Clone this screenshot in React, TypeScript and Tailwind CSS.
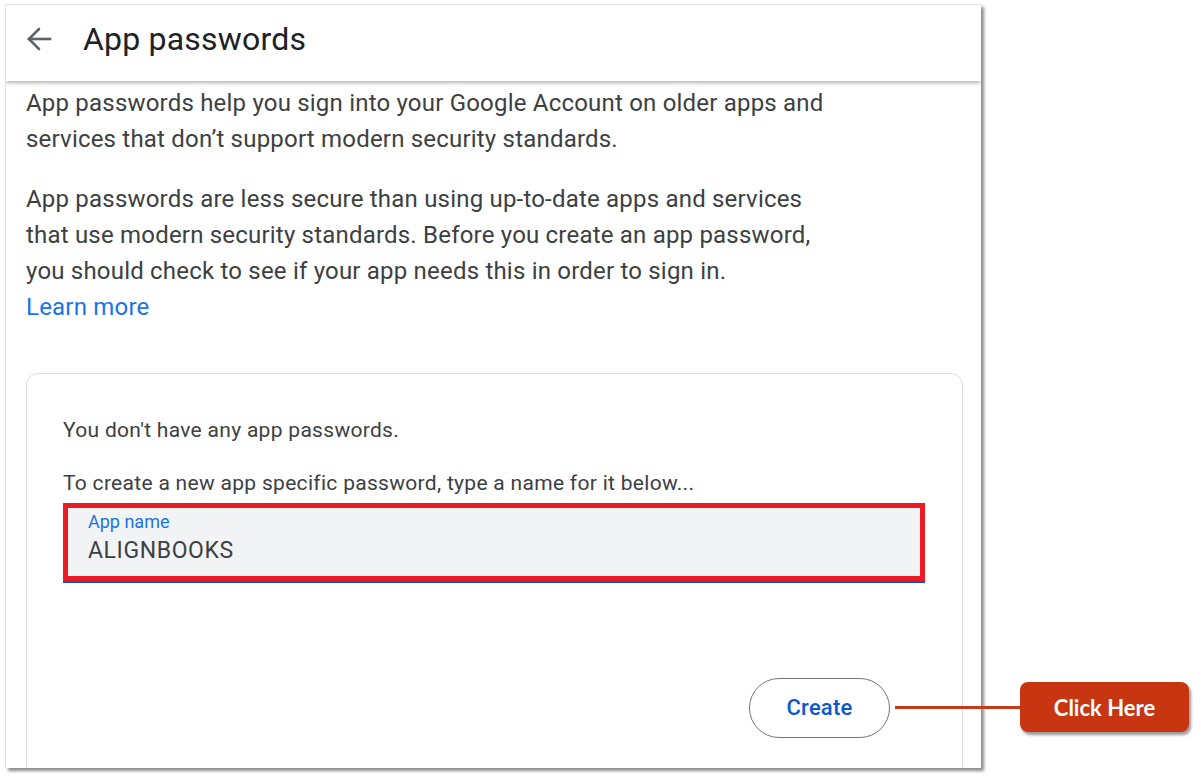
const font = { fontFamily: "Roboto, 'Noto Sans', Arial, sans-serif" };

function BackArrow() {
  return (
    <svg width="26" height="26" viewBox="0 0 26 26" fill="none" stroke="#5f6368" strokeWidth="2.6" strokeLinecap="square">
      <path d="M3 13h21" />
      <path d="M13 3L3 13l10 10" strokeLinecap="round" strokeLinejoin="miter" />
    </svg>
  );
}

export default function App() {
  return (
    <div className="relative h-[777px] w-[1201px] overflow-hidden bg-white" style={font}>
      <div className="ml-[5px] mt-[4px] flex h-[764px] w-[976px] flex-col overflow-hidden border-l border-t border-[#e4e4e4] bg-white shadow-[3px_3px_3px_rgba(0,0,0,0.45)]">
        <div className="relative z-10 flex h-[76px] shrink-0 items-center bg-white pb-[8px] shadow-[0_2px_4px_rgba(0,0,0,0.3)]">
          <div className="ml-[20px]">
            <BackArrow />
          </div>
          <h1 className="ml-[31px] text-[32px] font-normal tracking-[0.2px] text-[#202124]">App passwords</h1>
        </div>

        <div className="flex flex-col pl-[20px] pt-[4px] text-[24px] leading-[36px] tracking-[0.2px] text-[#3c4043]">
          <p>
            App passwords help you sign into your Google Account on older apps and
            <br />
            services that don’t support modern security standards.
          </p>
          <p className="mt-[24px]">
            App passwords are less secure than using up-to-date apps and services
            <br />
            that use modern security standards. Before you create an app password,
            <br />
            you should check to see if your app needs this in order to sign in.
          </p>
          <a className="text-[#1a73e8]">Learn more</a>

          <div className="mt-[48px] h-[420px] w-[937px] rounded-t-[12px] border border-[#dadce0] px-[36px] pt-[42px] tracking-[0.3px]">
            <p className="text-[21px] leading-[28px] text-[#3c4043]">You don't have any app passwords.</p>
            <p className="mt-[25px] text-[21px] leading-[28px] text-[#3c4043]">
              To create a new app specific password, type a name for it below...
            </p>
            <div className="mt-[6px] w-[862px] border-b-2 border-[#0b57d0]">
              <div className="flex h-[78px] flex-col border-[5px] border-[#ed1c24] bg-[#f1f3f4] pl-[20px]">
                <span className="mt-[3px] text-[18px] leading-[22px] tracking-[0px] text-[#1a73e8]">App name</span>
                <span className="mt-[4px] text-[23px] leading-[28px] tracking-[0.6px] text-[#3c4043]">ALIGNBOOKS</span>
              </div>
            </div>
            <div className="mt-[95px] flex justify-end pr-[36px]">
              <button className="h-[60px] w-[141px] rounded-full border border-[#747775] text-[22px] font-medium tracking-[0.2px] text-[#0b57d0]">
                Create
              </button>
            </div>
          </div>
        </div>
      </div>

      {/* annotation */}
      <div className="absolute left-[895px] top-[682px] flex items-center">
        <div className="h-[3px] w-[125px] bg-[#c63a1a]" />
        <div
          className="flex h-[50px] w-[169px] items-center justify-center rounded-[8px] bg-[#c83611] text-[22px] font-bold text-white shadow-[2px_3px_3px_rgba(0,0,0,0.4)]"
          style={{ fontFamily: "Lato, 'Open Sans', sans-serif" }}
        >
          Click Here
        </div>
      </div>
    </div>
  );
}
